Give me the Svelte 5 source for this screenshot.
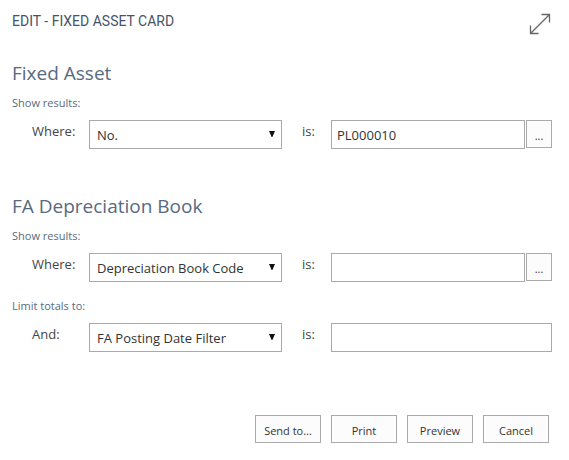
<script>
  let assetField = $state('No.');
  let assetValue = $state('PL000010');
  let bookField = $state('Depreciation Book Code');
  let bookValue = $state('');
  let totalsField = $state('FA Posting Date Filter');
  let totalsValue = $state('');
  const actions = ['Send to...', 'Print', 'Preview', 'Cancel'];
</script>

{#snippet dropdown(id, value, onchange, options)}
  <div class="select">
    <select {id} {value} onchange={(e) => onchange(e.currentTarget.value)}>
      {#each options as option}
        <option value={option}>{option}</option>
      {/each}
    </select>
    <svg class="arrow" viewBox="0 0 6 6" aria-hidden="true"><path d="M0 0H6L3.4 6H2.6Z" /></svg>
  </div>
{/snippet}

<form class="dialog" onsubmit={(e) => e.preventDefault()}>
  <header>
    <h1>EDIT - FIXED ASSET CARD</h1>
    <button class="expand" type="button" aria-label="Expand">
      <svg viewBox="0 0 22 22" aria-hidden="true">
        <path d="M1.5 20.5L20.5 1.5M12.5 1.5H20.5V9.5M1.5 12.5V20.5H9.5" />
      </svg>
    </button>
  </header>

  <section>
    <h2>Fixed Asset</h2>
    <p>Show results:</p>
    <div class="row">
      <label class="field" for="asset-field">Where:</label>
      {@render dropdown('asset-field', assetField, (v) => (assetField = v), ['No.', 'Description'])}
      <label class="is" for="asset-value">is:</label>
      <div class="value">
        <input id="asset-value" type="text" bind:value={assetValue} />
        <button class="lookup" type="button">...</button>
      </div>
    </div>
  </section>

  <section>
    <h2>FA Depreciation Book</h2>
    <p>Show results:</p>
    <div class="row">
      <label class="field" for="book-field">Where:</label>
      {@render dropdown('book-field', bookField, (v) => (bookField = v), ['Depreciation Book Code', 'FA No.'])}
      <label class="is" for="book-value">is:</label>
      <div class="value">
        <input id="book-value" type="text" bind:value={bookValue} />
        <button class="lookup" type="button">...</button>
      </div>
    </div>
    <p class="next">Limit totals to:</p>
    <div class="row">
      <label class="field" for="totals-field">And:</label>
      {@render dropdown('totals-field', totalsField, (v) => (totalsField = v), ['FA Posting Date Filter'])}
      <label class="is" for="totals-value">is:</label>
      <div class="value">
        <input id="totals-value" type="text" bind:value={totalsValue} />
      </div>
    </div>
  </section>

  <footer>
    {#each actions as action}
      <button type="button">{action}</button>
    {/each}
  </footer>
</form>

<style>
  :global(body) {
    margin: 0;
    background: #fff;
  }
  .dialog {
    box-sizing: border-box;
    padding: 12px 17px 17px 12px;
    font-family: 'Segoe UI', 'Open Sans', 'Noto Sans', sans-serif;
    font-size: 13px;
    color: #444;
  }
  header {
    display: flex;
    justify-content: space-between;
    align-items: flex-start;
    height: 48px;
  }
  h1 {
    margin: 0;
    font: 400 14px/18px Roboto, sans-serif;
    color: #465468;
  }
  button,
  input,
  select {
    box-sizing: border-box;
    margin: 0;
    border: 1px solid #aaa;
    border-radius: 0;
    font-family: inherit;
    color: #333;
  }
  .expand {
    display: block;
    width: 22px;
    height: 22px;
    margin: 1px 1px 0 0;
    padding: 0;
    border: 0;
    background: none;
  }
  .expand svg {
    display: block;
    width: 22px;
    height: 22px;
    fill: none;
    stroke: #666;
    stroke-width: 1.3;
  }
  section + section {
    margin-top: 44px;
  }
  h2 {
    margin: 0 0 8px;
    font-size: 19px;
    font-weight: 400;
    line-height: 26px;
    color: #586a80;
  }
  p {
    margin: 0 0 8px;
    font-size: 11px;
    line-height: 18px;
    color: #586a80;
  }
  .next {
    margin-top: 15px;
  }
  .row {
    display: flex;
    align-items: flex-start;
  }
  label {
    flex: none;
    box-sizing: border-box;
    line-height: 22px;
  }
  .field {
    width: 77px;
    padding-left: 20px;
  }
  .is {
    width: 49px;
    padding-left: 20px;
  }
  .select {
    position: relative;
    flex: 193 1 0;
  }
  select {
    display: block;
    width: 100%;
    height: 29px;
    padding: 0 20px 0 7px;
    appearance: none;
    background: #fff;
    font-size: 13px;
  }
  .arrow {
    position: absolute;
    top: 11px;
    right: 7px;
    width: 6px;
    height: 6px;
    fill: #111;
    pointer-events: none;
  }
  .value {
    display: flex;
    flex: 221 1 0;
    gap: 1px;
  }
  input {
    flex: 1;
    min-width: 0;
    height: 29px;
    padding: 0 5px;
    background: #fff;
    font-size: 13px;
  }
  .lookup {
    width: 26px;
    height: 28px;
    padding: 2px 0 0;
    background: #fcfcfc;
    font-size: 11px;
  }
  footer {
    display: flex;
    justify-content: flex-end;
    gap: 10px;
    margin: 63px 3px 0 0;
  }
  footer button {
    min-width: 66px;
    height: 28px;
    padding: 2px 8px 0;
    background: #fcfcfc;
    font-size: 11px;
  }
</style>
